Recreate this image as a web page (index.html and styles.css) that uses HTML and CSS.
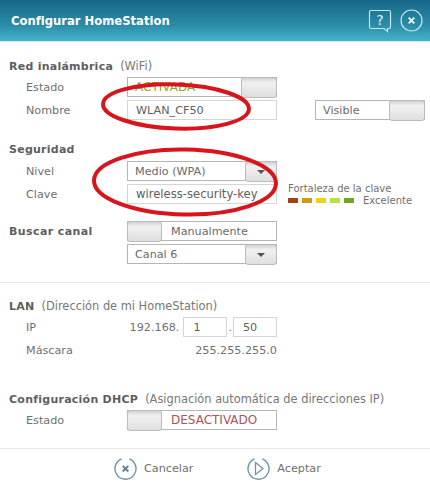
FILE: index.html
```html
<!DOCTYPE html>
<html lang="es">
<head>
    <meta charset="UTF-8">
    <meta name="viewport" content="width=device-width, initial-scale=1.0">
    <title>Configurar HomeStation</title>
    <link rel="stylesheet" href="styles.css">
</head>
<body>
    <header class="top-bar">
        <h1>Configurar HomeStation</h1>
        <div class="top-icons">
            <svg class="icon-help" width="24" height="24" viewBox="0 0 24 24" fill="none" stroke="#c4e6ee" stroke-width="1.2">
                <path d="M3 1.5h18a1.5 1.5 0 0 1 1.5 1.5v15a1.5 1.5 0 0 1-1.5 1.5h-1.5v3l-3.5-3H3A1.5 1.5 0 0 1 1.5 18V3A1.5 1.5 0 0 1 3 1.5z"/>
                <text x="12" y="16" text-anchor="middle" class="help-mark">?</text>
            </svg>
            <svg width="23" height="23" viewBox="0 0 23 23" fill="none" stroke="#c4e6ee">
                <circle cx="11.5" cy="11.5" r="10.5" stroke-width="1.2"/>
                <path d="M8.7 8.7l5.6 5.6M14.3 8.7l-5.6 5.6" stroke="#eef8fa" stroke-width="1.8"/>
            </svg>
        </div>
    </header>

    <main>
        <section class="group wifi">
            <h2>Red inalámbrica <span>(WiFi)</span></h2>
            <div class="row">
                <label>Estado</label>
                <div class="field toggle">
                    <span class="value on">ACTIVADA</span>
                    <span class="knob"></span>
                </div>
            </div>
            <div class="row">
                <label>Nombre</label>
                <div class="field input">WLAN_CF50</div>
                <div class="field toggle visible">
                    <span class="value">Visible</span>
                    <span class="knob"></span>
                </div>
            </div>
        </section>

        <section class="group security">
            <h2>Seguridad</h2>
            <div class="row">
                <label>Nivel</label>
                <div class="field toggle">
                    <span class="value">Medio (WPA)</span>
                    <span class="knob arrow"></span>
                </div>
            </div>
            <div class="row">
                <label>Clave</label>
                <div class="field input key">wireless-security-key</div>
                <div class="strength">
                    <p>Fortaleza de la clave</p>
                    <div class="strength-bar">
                        <i class="s1"></i><i class="s2"></i><i class="s3"></i><i class="s4"></i><i class="s5"></i>
                        <span>Excelente</span>
                    </div>
                </div>
            </div>
        </section>

        <section class="group channel">
            <div class="row">
                <label class="strong">Buscar canal</label>
                <div class="field toggle">
                    <span class="knob left"></span>
                    <span class="value">Manualmente</span>
                </div>
            </div>
            <div class="row">
                <label></label>
                <div class="field toggle">
                    <span class="value">Canal 6</span>
                    <span class="knob arrow"></span>
                </div>
            </div>
        </section>

        <section class="group lan">
            <h2>LAN <span>(Dirección de mi HomeStation)</span></h2>
            <div class="row">
                <label>IP</label>
                <div class="ip">
                    <span>192.168.</span>
                    <div class="field input octet">1</div>
                    <span>.</span>
                    <div class="field input octet">50</div>
                </div>
            </div>
            <div class="row">
                <label>Máscara</label>
                <div class="mask">255.255.255.0</div>
            </div>
        </section>

        <section class="group dhcp">
            <h2>Configuración DHCP <span>(Asignación automática de direcciones IP)</span></h2>
            <div class="row">
                <label>Estado</label>
                <div class="field toggle">
                    <span class="knob left"></span>
                    <span class="value off">DESACTIVADO</span>
                </div>
            </div>
        </section>
    </main>

    <footer>
        <a href="#" class="action">
            <svg width="23" height="23" viewBox="0 0 23 23" fill="none" stroke="#6f93ab">
                <path d="M15.5 2a10.5 10.5 0 1 1-8 0" stroke-width="1.4"/>
                <path d="M8.7 8.9l5.6 5.6M14.3 8.9l-5.6 5.6" stroke="#5f7f95" stroke-width="1.8"/>
            </svg>
            Cancelar
        </a>
        <a href="#" class="action">
            <svg width="23" height="23" viewBox="0 0 23 23" fill="none" stroke="#6f93ab">
                <path d="M15.5 2a10.5 10.5 0 1 1-8 0" stroke-width="1.4"/>
                <path d="M8.5 5.5l7.5 6-7.5 6z" stroke-width="1.3"/>
            </svg>
            Aceptar
        </a>
    </footer>

    <svg class="marks" width="430" height="489" viewBox="0 0 430 489" fill="none" stroke="#d8141c" stroke-width="4">
        <ellipse cx="176" cy="106.5" rx="73" ry="22" transform="rotate(2 176 106.5)"/>
        <ellipse cx="185" cy="182" rx="91" ry="32.5" transform="rotate(1 185 182)"/>
    </svg>
</body>
</html>
```

FILE: styles.css
```css
body {
    position: relative;
    margin: 0;
    height: 489px;
    overflow: hidden;
    background-color: white;
    color: #707070;
    font-family: "DejaVu Sans", sans-serif;
    font-size: 11.2px;
}

.top-bar {
    display: flex;
    justify-content: space-between;
    align-items: center;
    box-sizing: border-box;
    height: 42px;
    padding: 0 7px 0 11px;
    background: linear-gradient(#17688a, #2b8ba6 60%, #43b3c9);
    border-bottom: 1px solid #cfeaf0;
}

.top-bar h1 {
    margin: 0;
    color: white;
    font-size: 11.6px;
    font-weight: bold;
}

.top-icons {
    display: flex;
    align-items: center;
    gap: 8px;
}

.help-mark {
    fill: #dff2f6;
    stroke: none;
    font-size: 14px;
}

main {
    padding-left: 9px;
}

.group h2 {
    height: 16px;
    margin: 0 0 3px;
    color: #5e5e5e;
    font-size: 11px;
    font-weight: bold;
    line-height: 16px;
    letter-spacing: 0.25px;
}

.group h2 span {
    margin-left: 3px;
    color: #777;
    font-size: 11.4px;
    font-weight: normal;
    letter-spacing: 0;
}

.wifi {
    padding-top: 16px;
}

.security {
    padding-top: 19px;
}

.channel {
    padding-top: 14px;
    padding-bottom: 15px;
    border-bottom: 1px solid #e6e6e6;
    margin-left: -9px;
    padding-left: 9px;
}

.lan {
    padding-top: 15px;
}

.dhcp {
    padding-top: 28px;
    padding-bottom: 15px;
    border-bottom: 1px solid #e6e6e6;
    margin-left: -9px;
    padding-left: 9px;
}

.row {
    display: flex;
    align-items: center;
    height: 20px;
    margin-bottom: 3px;
}

.row label {
    flex: none;
    box-sizing: border-box;
    width: 118px;
    padding-left: 17px;
}

.row label.strong {
    padding-left: 0;
    color: #5e5e5e;
    font-size: 11px;
    font-weight: bold;
    letter-spacing: 0.4px;
}

.field {
    display: flex;
    align-items: center;
    flex: none;
    box-sizing: border-box;
    width: 150px;
    height: 20px;
    border: 1px solid #b5b5b5;
    background-color: white;
}

.input {
    padding-left: 8px;
    border-color: #d6d6d6;
    color: #606060;
}

.key {
    font-size: 11.6px;
}

.toggle .value {
    flex: 1;
    padding-left: 7px;
    color: #6a6a6a;
}

.knob {
    position: relative;
    flex: none;
    width: 36px;
    height: 21px;
    margin: -1px -1px -1px 0;
    border: 1px solid #bbb;
    border-radius: 3px;
    box-sizing: border-box;
    background: linear-gradient(#d2d2d2, #f0f0f0 25%, #dfdfdf);
}

.knob.left {
    width: 35px;
    margin: -1px 0 -1px -1px;
}

.knob.left + .value {
    padding-left: 9px;
}

.knob.arrow {
    width: 32px;
}

.knob.arrow::after {
    content: "";
    position: absolute;
    top: 8px;
    left: 11px;
    border-top: 4px solid #555;
    border-left: 4px solid transparent;
    border-right: 4px solid transparent;
}

.toggle .value.on {
    color: #8ba832;
    font-size: 12px;
}

.toggle .value.off {
    color: #a8545c;
    font-size: 12px;
}

.visible {
    width: 110px;
    margin-left: 38px;
}

.strength {
    margin-left: 11px;
    font-size: 10px;
}

.strength p {
    margin: 0 0 1px;
}

.strength-bar {
    display: flex;
    align-items: center;
    gap: 4px;
}

.strength-bar i {
    width: 10px;
    height: 5px;
}

.strength-bar span {
    margin-left: 5px;
}

.s1 {
    background-color: #a53f17;
}

.s2 {
    background-color: #cf9a12;
}

.s3 {
    background-color: #f2d218;
}

.s4 {
    background-color: #b6e23a;
}

.s5 {
    background-color: #74a626;
}

.ip {
    display: flex;
    justify-content: flex-end;
    align-items: center;
    gap: 1px;
    width: 150px;
}

.ip span:first-child {
    margin-right: 3px;
}

.octet {
    width: 44px;
    padding-left: 9px;
}

.mask {
    width: 150px;
    text-align: right;
}

footer {
    display: flex;
    gap: 54px;
    padding-top: 8px;
    padding-left: 114px;
}

.action {
    display: flex;
    align-items: center;
    gap: 7px;
    color: #707070;
    text-decoration: none;
}

.marks {
    position: absolute;
    top: 0;
    left: 0;
    pointer-events: none;
}
```
